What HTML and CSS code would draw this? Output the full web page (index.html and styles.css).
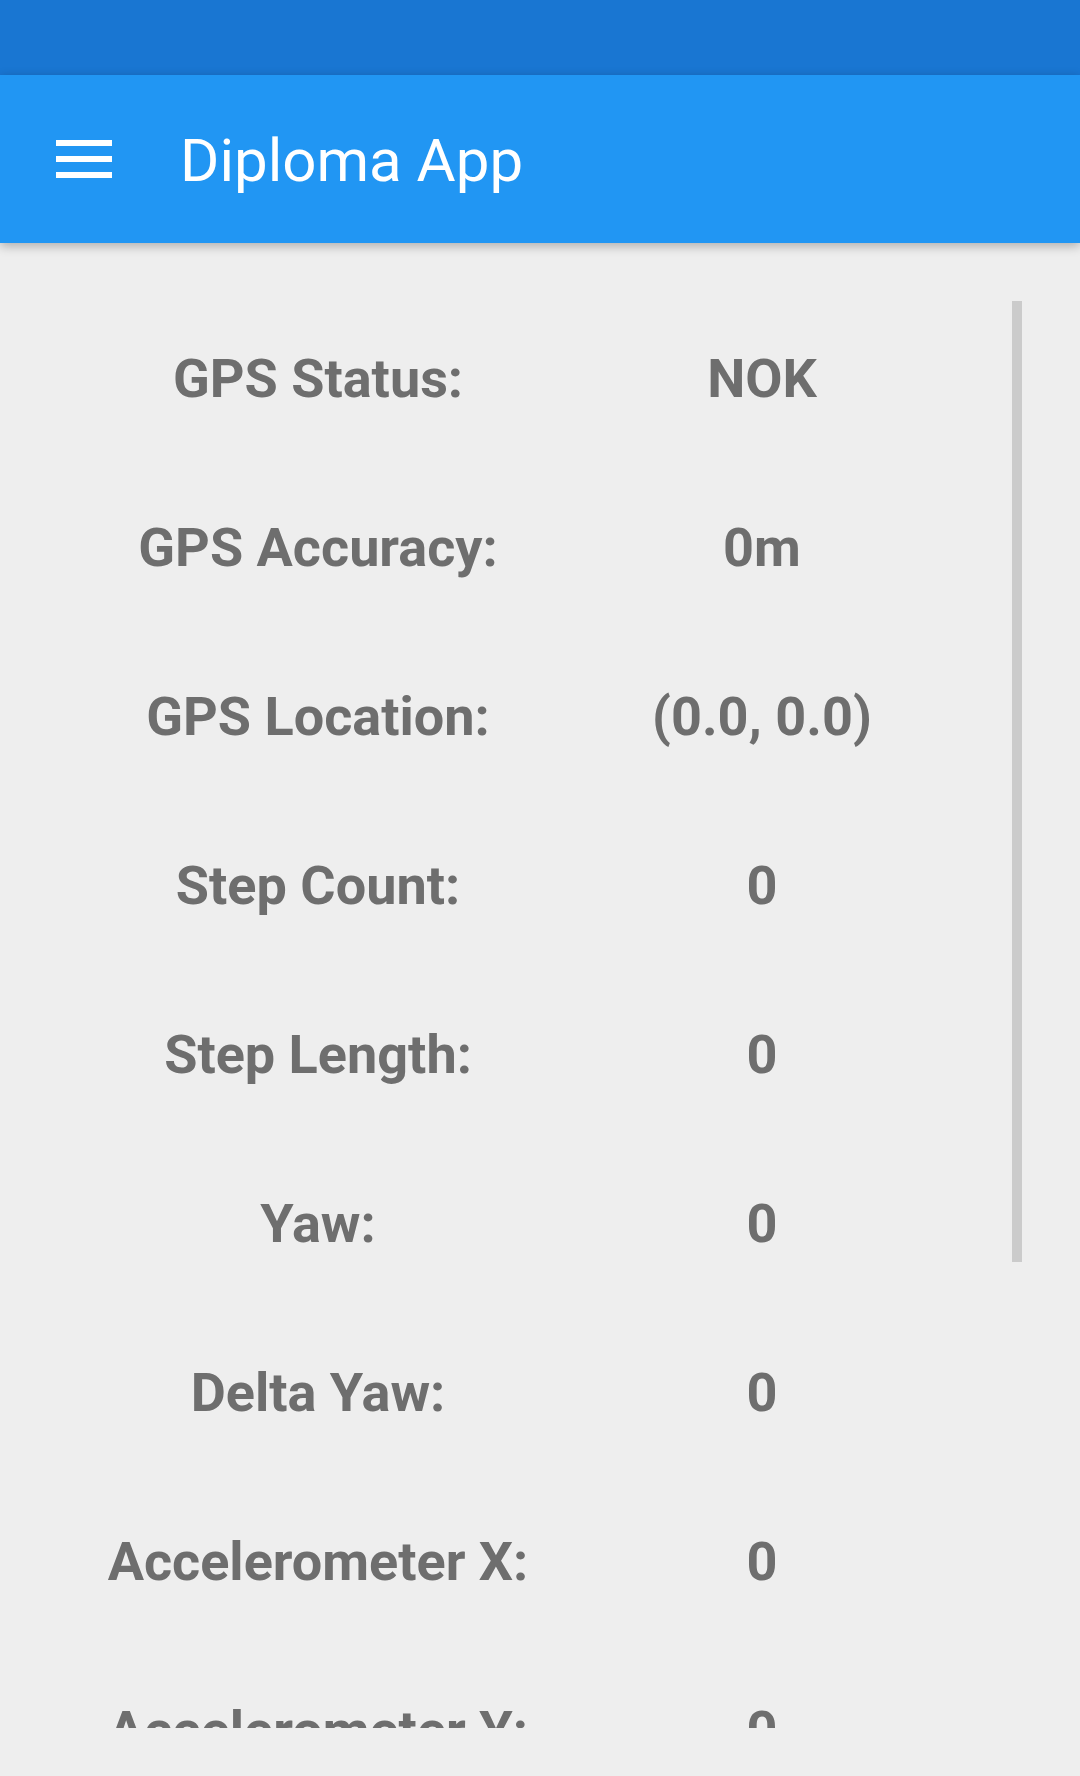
FILE: index.html
```html
<!DOCTYPE html>
<html lang="en">
<head>
<meta charset="utf-8">
<title>Diploma App</title>
<link rel="stylesheet" href="styles.css">
</head>
<body>
<div class="status-bar"></div>
<header class="app-bar">
  <svg class="menu-icon" width="56" height="38" viewBox="0 0 56 38" aria-hidden="true">
    <rect x="0" y="0" width="56" height="6" fill="#fff"/>
    <rect x="0" y="16" width="56" height="6" fill="#fff"/>
    <rect x="0" y="32" width="56" height="6" fill="#fff"/>
  </svg>
  <h1 class="title">Diploma App</h1>
</header>
<main class="content">
  <div class="scroll-view">
    <div class="rows">
      <div class="label">GPS Status:</div><div class="value">NOK</div>
      <div class="label">GPS Accuracy:</div><div class="value">0m</div>
      <div class="label">GPS Location:</div><div class="value">(0.0, 0.0)</div>
      <div class="label">Step Count:</div><div class="value">0</div>
      <div class="label">Step Length:</div><div class="value">0</div>
      <div class="label">Yaw:</div><div class="value">0</div>
      <div class="label">Delta Yaw:</div><div class="value">0</div>
      <div class="label">Accelerometer X:</div><div class="value">0</div>
      <div class="label">Accelerometer Y:</div><div class="value">0</div>
    </div>
    <div class="scroll-thumb"></div>
  </div>
</main>
</body>
</html>
```

FILE: styles.css
```css
html, body {
  margin: 0;
  padding: 0;
}

body {
  width: 1080px;
  height: 1776px;
  overflow: hidden;
  background: #eeeeee;
  font-family: Roboto, "Liberation Sans", sans-serif;
  display: flex;
  flex-direction: column;
}

.status-bar {
  height: 75px;
  background: #1976d2;
  flex: none;
}

.app-bar {
  height: 168px;
  flex: none;
  background: #2196f3;
  display: flex;
  align-items: center;
  padding-left: 56px;
  box-shadow: 0 3px 10px rgba(0, 0, 0, 0.28);
  position: relative;
  z-index: 1;
}

.menu-icon {
  display: block;
  flex: none;
}

.title {
  margin: 0 0 0 68px;
  padding-top: 4px;
  color: #ffffff;
  font-size: 60px;
  font-weight: 400;
  line-height: 1;
}

.content {
  flex: 1;
  min-height: 0;
  padding: 48px;
  display: flex;
  flex-direction: column;
}

.scroll-view {
  flex: 1;
  min-height: 0;
  position: relative;
  overflow: hidden;
}

.rows {
  display: grid;
  grid-template-columns: 1fr 1fr;
  grid-auto-rows: 169px;
  padding: 3px 48px 0;
  color: #6e6e6e;
  font-size: 54px;
  font-weight: 700;
  line-height: 169px;
  text-align: center;
  white-space: nowrap;
}

.scroll-thumb {
  position: absolute;
  top: 10px;
  right: 10px;
  width: 10px;
  height: 961px;
  background: #cbcbcb;
}
```
